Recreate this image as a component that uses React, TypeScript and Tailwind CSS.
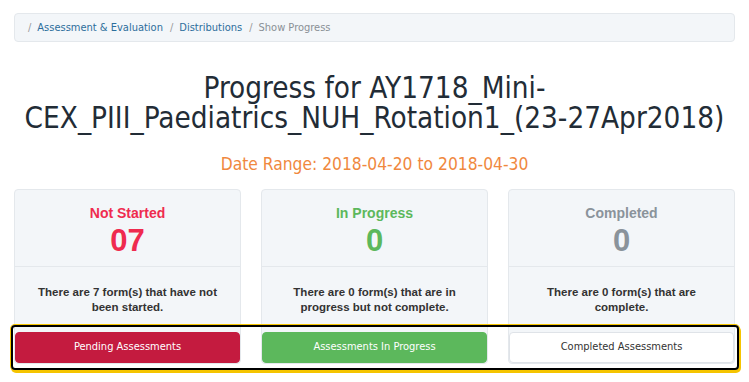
import React from 'react';

// ─── Données ──────────────────────────────────────────────
interface StatusCard {
  label: string;
  count: string;
  text: string;
  labelColor: string;
  button: string;
  buttonClass: string;
}

const CARDS: StatusCard[] = [
  {
    label: 'Not Started',
    count: '07',
    text: 'There are 7 form(s) that have not been started.',
    labelColor: 'text-[#ef2b4f]',
    button: 'Pending Assessments',
    buttonClass: 'bg-[#c41b3f] text-white border-[#c41b3f]',
  },
  {
    label: 'In Progress',
    count: '0',
    text: 'There are 0 form(s) that are in progress but not complete.',
    labelColor: 'text-[#5cb85c]',
    button: 'Assessments In Progress',
    buttonClass: 'bg-[#5cb85c] text-white border-[#5cb85c]',
  },
  {
    label: 'Completed',
    count: '0',
    text: 'There are 0 form(s) that are complete.',
    labelColor: 'text-[#8a939b]',
    button: 'Completed Assessments',
    buttonClass: 'bg-white text-[#333] border-[#dfe3e8]',
  },
];

const CRUMBS = ['Assessment & Evaluation', 'Distributions'];

export default function App() {
  return (
    <div className="min-h-screen bg-white px-[14px] pt-[13px] font-['DejaVu_Sans_Condensed','DejaVu_Sans',sans-serif]">
      {/* ─── Breadcrumb ─── */}
      <nav className="flex h-[29px] items-center rounded-[4px] border border-[#e4e8ec] bg-[#f3f6f9] pl-[13px] pt-[2px] text-[11px]">
        {CRUMBS.map((c) => (
          <React.Fragment key={c}>
            <span className="pr-[6px] text-[#999]">/</span>
            <a className="pr-[7px] text-[#2d6e9c]">{c}</a>
          </React.Fragment>
        ))}
        <span className="pr-[6px] text-[#999]">/</span>
        <span className="text-[#8a9096]">Show Progress</span>
      </nav>

      {/* ─── Titre ─── */}
      <h1 className="mx-auto mt-[31px] max-w-[722px] text-center text-[29.4px] leading-[30px] text-[#222c36]">
        Progress for AY1718_Mini-CEX_PIII_Paediatrics_NUH_Rotation1_(23-27Apr2018)
      </h1>
      <p className="mt-[19px] text-center text-[17.3px] leading-[24px] text-[#f0883e]">
        Date Range: 2018-04-20 to 2018-04-30
      </p>

      {/* ─── Cartes ─── */}
      <div className="relative mt-[13px] grid grid-cols-3 gap-5">
        {CARDS.map((card) => (
          <div
            key={card.label}
            className="flex flex-col rounded-[4px] border border-[#e4e8ec] bg-[#f3f6f9] font-['Liberation_Sans',Arial,sans-serif]"
          >
            <div className="flex h-[77px] flex-col items-center border-b border-[#e4e8ec] pt-[15px]">
              <div className={`text-[14px] font-bold leading-[16px] ${card.labelColor}`}>{card.label}</div>
              <div className={`text-[31px] font-bold leading-[40px] ${card.labelColor}`}>{card.count}</div>
            </div>
            <p className="h-[65px] px-4 pt-[18px] text-center text-[11.5px] font-bold leading-[15px] text-[#333]">
              {card.text}
            </p>
            <button
              className={`h-[31px] rounded-[4px] border font-['DejaVu_Sans_Condensed','DejaVu_Sans',sans-serif] text-[11px] ${card.buttonClass}`}
            >
              {card.button}
            </button>
          </div>
        ))}

        {/* cadre d'annotation */}
        <div className="pointer-events-none absolute bottom-[-6px] left-[-3px] right-[-4px] h-[45px] rounded-[4px] border-2 border-black shadow-[0_0_0_1px_#f5c400,1px_2px_0_1px_#f5c400]" />
      </div>
    </div>
  );
}
